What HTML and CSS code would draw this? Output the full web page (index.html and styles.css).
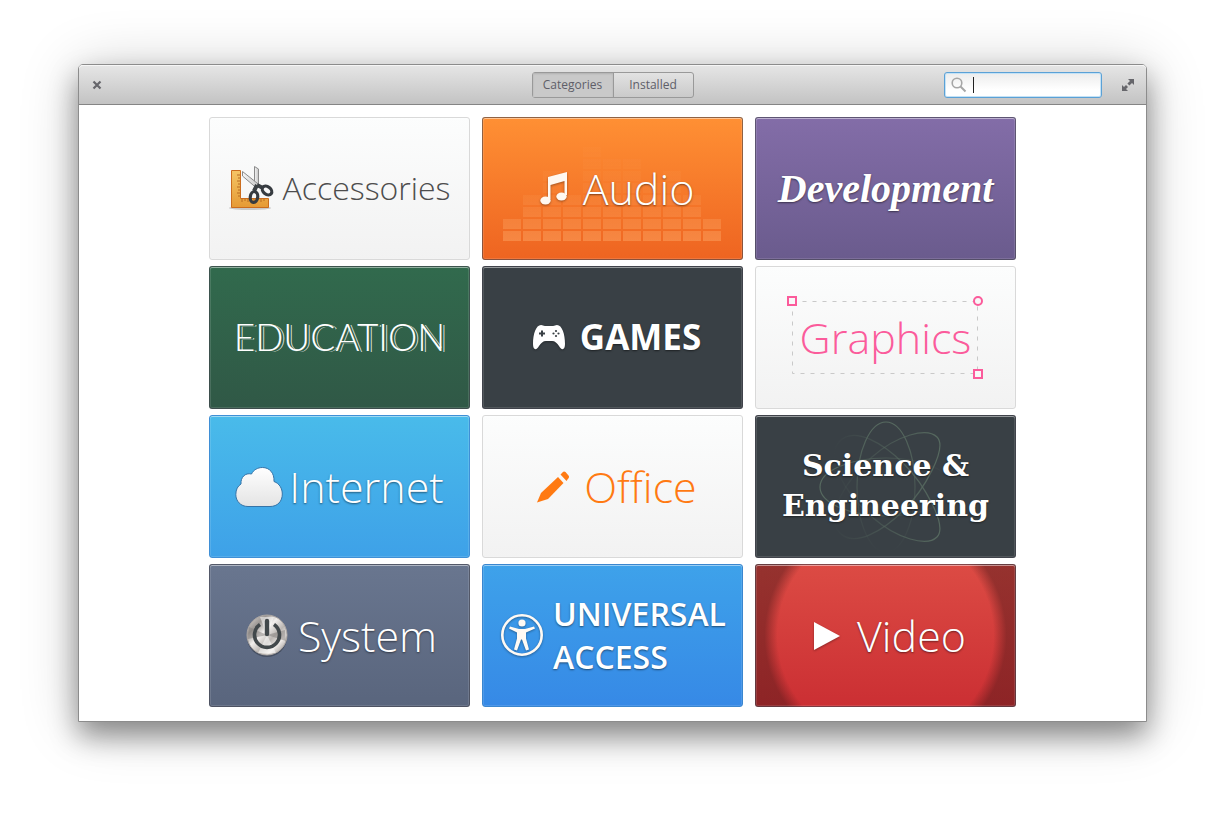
FILE: index.html
```html
<!DOCTYPE html>
<html lang="en">
<head>
<meta charset="utf-8">
<title>Software Center</title>
<link rel="stylesheet" href="styles.css">
</head>
<body>
<div class="window">
  <header class="titlebar">
    <button class="icon-button" type="button" aria-label="Close">
      <svg width="10" height="10" viewBox="0 0 10 10"><path d="M1.500 1.500l7 7M8.500 1.500l-7 7" stroke="#66666b" stroke-width="2.200"/></svg>
    </button>
    <nav class="switcher">
      <button class="switch active" type="button">Categories</button>
      <button class="switch" type="button">Installed</button>
    </nav>
    <div class="tools">
      <div class="search">
        <svg class="search-icon" width="16" height="16" viewBox="0 0 16 16" fill="none" stroke="#a6a6a6"><circle cx="6" cy="6" r="4.800" stroke-width="1.600"/><path d="M9.500 9.500l5 5" stroke-width="2"/></svg>
        <input class="search-input" type="text" aria-label="Search">
        <span class="caret"></span>
      </div>
      <button class="icon-button" type="button" aria-label="Maximize">
        <svg width="14" height="14" viewBox="0 0 14 14" fill="#66666b"><path d="M7 1h6v6l-2-2-2.600 2.600-2-2L9 3zM7 13H1V7l2 2 2-2 2 2-2 2z"/></svg>
      </button>
    </div>
  </header>
  <main class="grid">
    <button class="tile light accessories" type="button">
      <svg width="46" height="46" viewBox="0 0 46 46">
        <defs>
          <linearGradient id="wood" x1="0" y1="0" x2="0" y2="1"><stop offset="0" stop-color="#f5c565"/><stop offset="1" stop-color="#e59a35"/></linearGradient>
          <linearGradient id="blade" x1="0" y1="0" x2="1" y2="0"><stop offset="0" stop-color="#f6f6f6"/><stop offset="1" stop-color="#c4c4c4"/></linearGradient>
        </defs>
        <ellipse cx="21" cy="43" rx="21" ry="2" fill="#000" opacity=".18"/>
        <path d="M2.500 5.500h9v28h28v9h-37z" fill="url(#wood)" stroke="#cb6d1e"/>
        <path d="M8 10h3M9 13h2M8 16h3M9 19h2M8 22h3M9 25h2M8 28h3M9 31h2M13 34v3M16 34v2M19 34v3M22 34v2M25 34v3M28 34v2M32 34v3M35 34v2" stroke="#b86a20"/>
        <path d="M25.500 1.500l4 2.500v18l-4-1z" fill="url(#blade)" stroke="#8a8a8a"/>
        <path d="M13.500 6.500v4.500l14 12 3-3z" fill="url(#blade)" stroke="#8a8a8a"/>
        <path d="M28 20l-3 6M28 20l6 3" stroke="#3b4044" stroke-width="4"/>
        <ellipse cx="25" cy="32" rx="3.700" ry="5.500" transform="rotate(8 25 32)" fill="none" stroke="#363b40" stroke-width="3.200"/>
        <ellipse cx="38" cy="25.500" rx="5.300" ry="3.700" transform="rotate(38 38 25.500)" fill="none" stroke="#363b40" stroke-width="3.200"/>
      </svg>
      <span class="label small">Accessories</span>
    </button>
    <button class="tile audio offset" type="button">
      <svg class="backdrop" width="219" height="108" viewBox="0 0 219 108">
        <defs>
          <linearGradient id="eqfade" x1="0" y1="0" x2="0" y2="1"><stop offset="0" stop-color="#ffb070" stop-opacity=".03"/><stop offset=".55" stop-color="#ffb070" stop-opacity=".1"/><stop offset="1" stop-color="#ffb070" stop-opacity=".42"/></linearGradient>
          <pattern id="cells" width="20" height="12" patternUnits="userSpaceOnUse"><path d="M0 2h18v10H0z" fill="#fff"/></pattern>
          <mask id="eqmask"><path d="M0 84h20V60h20V36h20v24h20V12h20v12h40v24h20V36h20v24h20v24h20v24H0z" fill="url(#cells)"/></mask>
        </defs>
        <path d="M0 0h219v108H0z" fill="url(#eqfade)" mask="url(#eqmask)"/>
      </svg>
      <svg class="shadow" width="30" height="34" viewBox="0 0 30 34" fill="#fff8f0"><path d="M9 5L28 0v23h-2.500V9L11.500 13v14H9z"/><ellipse cx="6.500" cy="28.500" rx="5.200" ry="4"/><ellipse cx="22.500" cy="24.500" rx="5.200" ry="4"/></svg>
      <span class="label">Audio</span>
    </button>
    <button class="tile development" type="button"><span class="label script">Development</span></button>
    <button class="tile education raised" type="button"><span class="label chalk">EDUCATION</span></button>
    <button class="tile dark offset raised" type="button">
      <svg class="shadow" width="34" height="26" viewBox="0 0 34 26"><path d="M9 1c2 0 2 1 4 1h8c2 0 2-1 4-1 5 0 8 9 8 19 0 7-4 6-6 2-2-3-4-5-7-5h-6c-3 0-5 2-7 5-2 4-6 5-6-2C1 10 4 1 9 1z" fill="#fff"/><path d="M10 6.500v6M7 9.500h6" stroke="#394045" stroke-width="2"/><g fill="#394045"><circle cx="24" cy="7" r="1.100"/><circle cx="24" cy="12" r="1.100"/><circle cx="21.500" cy="9.500" r="1.100"/><circle cx="26.500" cy="9.500" r="1.100"/></g></svg>
      <span class="label bold">GAMES</span>
    </button>
    <button class="tile light graphics" type="button">
      <svg class="backdrop" width="196" height="84" viewBox="0 0 196 84" fill="none">
        <path d="M5.500 5.500h185v72H5.500z" stroke="#c9c9c9" stroke-dasharray="4 6"/>
        <g stroke="#fb5b9b" stroke-width="2" fill="#f8f8f8"><path d="M1 1h8v8H1zM187 74h8v8h-8z"/><circle cx="191" cy="5" r="4"/></g>
      </svg>
      <span class="label">Graphics</span>
    </button>
    <button class="tile internet" type="button">
      <svg width="48" height="42" viewBox="0 0 48 42"><defs><linearGradient id="cloud" x1="0" y1="0" x2="0" y2="1"><stop offset="0" stop-color="#fff"/><stop offset="1" stop-color="#e4e4e4"/></linearGradient></defs><path d="M13 40.500C5.500 40.500.8 35 .8 28.500c0-5 2-8.500 5.200-10.500C5.500 11.500 10 6.500 16.500 8 18.500 4 22.500 1.500 27.500 1.500c7 0 12 5.500 11.500 14 5.500 2 8.300 7 8.300 12.500 0 7.500-4.800 12.500-12.300 12.500z" fill="url(#cloud)" stroke="#3574a8"/></svg>
      <span class="label">Internet</span>
    </button>
    <button class="tile light office offset" type="button">
      <svg width="34" height="34" viewBox="0 0 34 34" fill="#ff7a12"><path d="M22 7l5.500 6L12 29 1 32.500 5 23z"/><path d="M24.500 4.500c2-2 3-4 5-2.500l3 3.500c1.500 2-.5 3-2 5.500z"/></svg>
      <span class="label">Office</span>
    </button>
    <button class="tile dark science raised" type="button">
      <svg class="backdrop" width="134" height="134" viewBox="0 0 134 134" fill="none" stroke-width="1.200">
        <defs>
          <linearGradient id="orbit-down" x1="0" y1="0" x2="0" y2="1"><stop offset="0" stop-color="#56695f"/><stop offset="1" stop-color="#56695f" stop-opacity="0"/></linearGradient>
          <linearGradient id="orbit-left" gradientUnits="userSpaceOnUse" x1="14" y1="0" x2="120" y2="0"><stop offset="0" stop-color="#56695f" stop-opacity="0"/><stop offset="1" stop-color="#56695f"/></linearGradient>
          <linearGradient id="orbit-right" x1="0" y1="0" x2="1" y2="0"><stop offset="0" stop-color="#56695f"/><stop offset="1" stop-color="#56695f" stop-opacity="0"/></linearGradient>
        </defs>
        <ellipse cx="67" cy="67" rx="29" ry="65" stroke="url(#orbit-down)"/>
        <ellipse cx="67" cy="67" rx="66" ry="29" stroke="url(#orbit-right)"/>
        <g stroke="url(#orbit-left)"><path d="M118 17c-10-10-40-2-65 20S5 95 20 112s45-2 65-22 44-62 33-73z"/><path d="M118 117c-10 10-40 2-65-20S5 39 20 22s45 2 65 22 44 62 33 73z"/></g>
      </svg>
      <span class="label deco">Science &amp;<br>Engineering</span>
    </button>
    <button class="tile system" type="button">
      <svg width="42" height="44" viewBox="0 0 42 44">
        <defs><linearGradient id="metal" x1="0" y1="0" x2="1" y2="1"><stop offset="0" stop-color="#e9e5e2"/><stop offset=".25" stop-color="#9b9693"/><stop offset=".42" stop-color="#f2efed"/><stop offset=".6" stop-color="#bcb7b3"/><stop offset=".75" stop-color="#eeeae7"/><stop offset="1" stop-color="#77726f"/></linearGradient></defs>
        <circle cx="21" cy="23" r="20" fill="#000" opacity=".25"/>
        <circle cx="21" cy="21" r="20" fill="url(#metal)" stroke="#aaa5a2"/>
        <path d="M21 21L3 13l-1 12zM21 21l18-5 1 11z" fill="#827e7b" opacity=".5"/>
        <path d="M21 21L14 3h14zM21 21l-9 18h18z" fill="#fff" opacity=".5"/>
        <path d="M14 10.500a12.500 12.500 0 1 0 14 0" fill="none" stroke="#42484b" stroke-width="3.600"/><path d="M21 7v13" stroke="#42484b" stroke-width="4.400" stroke-linecap="round"/>
      </svg>
      <span class="label">System</span>
    </button>
    <button class="tile access raised" type="button">
      <svg class="shadow" width="42" height="42" viewBox="0 0 42 42" fill="#fffaf4"><circle cx="21" cy="21" r="19.700" fill="none" stroke="#fffaf4" stroke-width="2.600"/><circle cx="21" cy="9" r="3.600"/><path d="M9 12.500l9 2.500h6l9-2.500 1 2-9 4v6l3 11-3 1-4-11h-1l-4 11-3-1 3-11v-6l-8-4z"/></svg>
      <span class="label semibold">UNIVERSAL<br>ACCESS</span>
    </button>
    <button class="tile video offset" type="button">
      <svg class="shadow" width="28" height="30" viewBox="0 0 28 30"><path d="M1 1l26 14L1 29z" fill="#fff"/></svg>
      <span class="label">Video</span>
    </button>
  </main>
</div>
</body>
</html>
```
FILE: styles.css
```css
* { box-sizing: border-box; }

body {
  margin: 0;
  padding: 64px 78px 92px;
  background: #fff;
  font-family: "Open Sans", "Noto Sans", sans-serif;
}

button {
  margin: 0;
  padding: 0;
  border: 0;
  background: none;
  color: inherit;
  font: inherit;
}

svg { display: block; flex: none; }

.window {
  border: 1px solid #8c8c8c;
  border-radius: 5px 5px 0 0;
  background: #fff;
  box-shadow: 0 14px 28px rgba(0, 0, 0, 0.4), 0 4px 60px rgba(0, 0, 0, 0.2);
}

.titlebar {
  display: grid;
  grid-template-columns: 1fr auto 1fr;
  align-items: center;
  height: 40px;
  padding: 0 10px;
  border-bottom: 1px solid #858585;
  border-radius: 4px 4px 0 0;
  background: linear-gradient(#e6e6e6, #c3c3c3);
  box-shadow: inset 0 1px #f6f6f6;
}

.icon-button {
  display: grid;
  place-items: center;
  width: 16px;
  height: 16px;
}

.switcher {
  display: flex;
  border: 1px solid #999;
  border-radius: 3px;
  background: linear-gradient(#e2e2e2, #cacaca);
}

.switch {
  width: 80px;
  height: 24px;
  color: #5e5e68;
  font-size: 12px;
  line-height: 24px;
}

.switch + .switch { border-left: 1px solid #999; }

.switch.active { background: #c9c9c9; box-shadow: inset 0 1px 2px rgba(0, 0, 0, 0.12); }

.tools {
  display: flex;
  align-items: center;
  justify-content: flex-end;
  gap: 18px;
}

.search { position: relative; width: 158px; }

.search-input {
  display: block;
  width: 100%;
  height: 26px;
  padding: 0 8px 0 28px;
  border: 1px solid #5ba1d6;
  border-radius: 3px;
  outline: 0;
  background: linear-gradient(#ececec, #fff 70%);
  box-shadow: inset 0 0 0 1px #c4e2f6;
  font: inherit;
  font-size: 12px;
}

.search-icon { position: absolute; left: 7px; top: 5px; }

.caret {
  position: absolute;
  left: 29px;
  top: 5px;
  width: 1px;
  height: 16px;
  background: #222;
}

.grid {
  display: grid;
  grid-template-columns: repeat(3, 261px);
  justify-content: center;
  gap: 6px 12px;
  padding: 12px 0 14px;
}

.tile {
  position: relative;
  display: flex;
  align-items: center;
  justify-content: center;
  gap: 12px;
  height: 143px;
  border: 1px solid rgba(70, 70, 80, 0.6);
  border-radius: 3px;
  background-origin: border-box;
  box-shadow: inset 0 1px rgba(255, 255, 255, 0.4), inset 0 0 0 1px rgba(255, 255, 255, 0.12);
  color: #fff;
  text-shadow: 0 1px 2px rgba(0, 0, 0, 0.5);
}

.light {
  border-color: #d9d9d9;
  background-image: linear-gradient(#fcfdfd, #f2f2f2);
  color: #4d4d4d;
  text-shadow: none;
}

.offset { gap: 14px; padding-left: 8px; }
.raised { padding-bottom: 2px; }

.label {
  position: relative;
  font-size: 43px;
  font-weight: 300;
  line-height: 60px;
}

.small { font-size: 32px; }
.bold { font-size: 35px; font-weight: 700; }
.semibold { font-size: 32px; font-weight: 600; line-height: 43px; text-align: left; }

.script { font-family: "Liberation Serif", serif; font-size: 40px; font-style: italic; font-weight: 700; }

.chalk {
  font-family: Lato, sans-serif;
  font-size: 37px;
  text-shadow: 2px 1px 0 #305f49, 3px 1px 0 rgba(255, 255, 255, 0.8);
}

.deco { font-family: "DejaVu Serif", serif; font-size: 30px; font-weight: 700; line-height: 40px; }

.shadow { position: relative; filter: drop-shadow(0 1px 1px rgba(0, 0, 0, 0.35)); }

.backdrop { position: absolute; }

.accessories { gap: 8px; padding-bottom: 2px; }
.audio { background-image: linear-gradient(#ff9034, #ee6421); }
.audio .backdrop { left: 20px; bottom: 18px; }
.development { background-image: linear-gradient(#836da8, #6a5b8d); }
.education { background-image: linear-gradient(#316a4d, #305846); }
.dark { background-color: #394045; }
.graphics { color: #fb5b9b; }
.graphics .backdrop { left: 31px; top: 29px; }
.internet { gap: 6px; border-color: #3f8fd6; background-image: linear-gradient(#49bbea, #3ea1e8); }
.office { color: #ff7a12; }
.science .backdrop { left: 63px; top: 4px; }
.system { gap: 10px; padding-left: 4px; background-image: linear-gradient(#69768f, #59657d); }
.access { gap: 10px; padding-left: 2px; border-color: #3a86cf; background-image: linear-gradient(#3ea2ea, #3689e6); }
.video {
  gap: 16px;
  background-image:
    radial-gradient(circle, transparent 108px, rgba(80, 25, 25, 0.5) 121px),
    linear-gradient(#dc4b44, #cb2f33);
}
```
